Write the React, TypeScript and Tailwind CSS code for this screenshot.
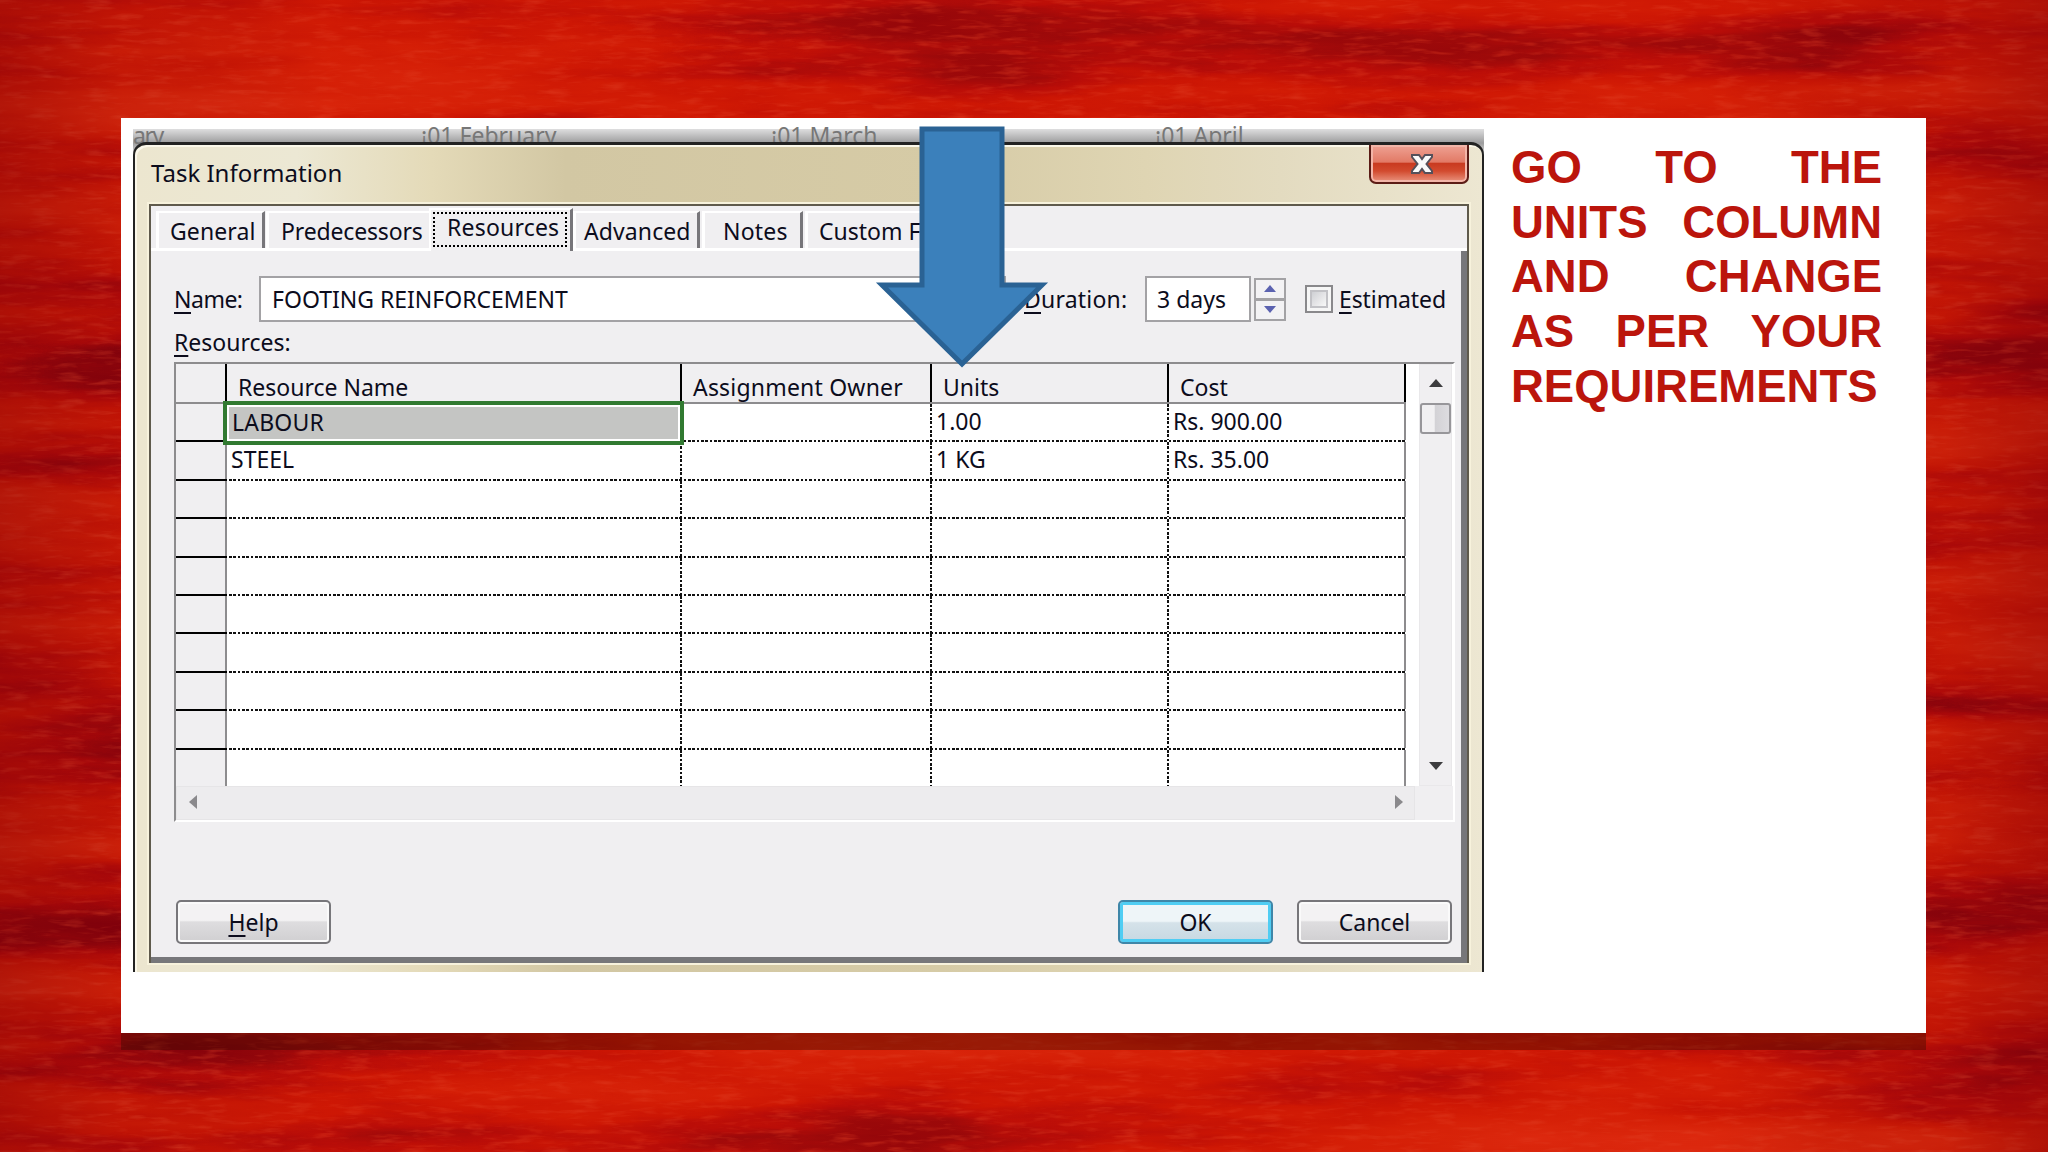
import type { ReactNode } from "react";
import clsx from "clsx";

const rows = [
  { name: "LABOUR", owner: "", units: "1.00", cost: "Rs. 900.00" },
  { name: "STEEL", owner: "", units: "1 KG", cost: "Rs. 35.00" },
  ...Array.from({ length: 8 }, () => ({ name: "", owner: "", units: "", cost: "" })),
];

const dotsX = "bg-[repeating-linear-gradient(90deg,#111_0_2.6px,transparent_2.6px_4.33px)]";
const dotsY = "bg-[repeating-linear-gradient(180deg,#111_0_2.6px,transparent_2.6px_4.33px)]";

function PaintedBackdrop() {
  return (
    <svg className="absolute inset-0" width="2048" height="1152">
      <defs>
        <filter id="paint" x="0" y="0" width="100%" height="100%" colorInterpolationFilters="sRGB">
          <feTurbulence type="fractalNoise" baseFrequency="0.0016 0.0125" numOctaves="7" seed="23" />
          <feColorMatrix values="1 0 0 0 0  1 0 0 0 0  1 0 0 0 0  0 0 0 0 1" />
          <feComponentTransfer>
            <feFuncR type="table" tableValues="0.5 0.5 0.55 0.7 0.8 0.84 0.86 0.88 0.88" />
            <feFuncG type="table" tableValues="0 0 0.02 0.04 0.09 0.13 0.16 0.18 0.2" />
            <feFuncB type="table" tableValues="0.05 0.05 0.05 0.04 0.02 0.03 0.05 0.07 0.1" />
          </feComponentTransfer>
        </filter>
        <filter id="grain" x="0" y="0" width="100%" height="100%" colorInterpolationFilters="sRGB">
          <feTurbulence type="fractalNoise" baseFrequency="0.035 0.2" numOctaves="3" seed="4" />
          <feColorMatrix values="0 0 0 0 0.9  0 0 0 0 0.3  0 0 0 0 0.18  2.4 0 0 0 -1.2" />
        </filter>
        <linearGradient id="edges">
          <stop offset="0" stopColor="#7a0008" stopOpacity="0.4" />
          <stop offset="0.06" stopColor="#7a0008" stopOpacity="0.15" />
          <stop offset="0.16" stopColor="#d01602" stopOpacity="0.25" />
          <stop offset="0.84" stopColor="#d01602" stopOpacity="0.25" />
          <stop offset="0.95" stopColor="#7a0008" stopOpacity="0.15" />
          <stop offset="1" stopColor="#7a0008" stopOpacity="0.4" />
        </linearGradient>
      </defs>
      <rect width="2048" height="1152" filter="url(#paint)" />
      <rect width="2048" height="1152" filter="url(#grain)" opacity="0.5" />
      <rect width="2048" height="1152" fill="url(#edges)" />
    </svg>
  );
}

function Tab({ children, className }: { children: ReactNode; className?: string }) {
  return (
    <div
      className={clsx(
        "h-[37px] border-t-2 border-l-3 border-white bg-[#f0eff1] text-[23px] leading-[36px] whitespace-nowrap",
        className,
      )}
    >
      {children}
    </div>
  );
}

function Hot({ letter, rest }: { letter: string; rest: string }) {
  return (
    <span>
      <span className="underline decoration-2 underline-offset-[4px]">{letter}</span>
      {rest}
    </span>
  );
}

function DialogButton({ children, primary }: { children: ReactNode; primary?: boolean }) {
  return (
    <button
      className={clsx(
        "h-[44px] w-[155px] rounded-[5px] border-2 text-[23px] leading-[40px]",
        primary
          ? "border-[#3f86a8] bg-[linear-gradient(#eef5f8_0_48%,#d5e2e9_52%,#c6d8e2)] shadow-[inset_0_0_0_3px_#4fcdf3]"
          : "border-[#77767a] bg-[linear-gradient(#f3f2f3_0_46%,#dedddf_50%,#d0cfd1)] shadow-[inset_0_0_0_2px_#fafafa]",
      )}
    >
      {children}
    </button>
  );
}

function HeaderCell({ children, className }: { children?: ReactNode; className: string }) {
  return (
    <div className={clsx("h-full border-r-2 border-black pt-[6px] text-[23px] leading-[34px]", className)}>
      {children}
    </div>
  );
}

function BodyCell({ children, width, last }: { children?: ReactNode; width: string; last?: boolean }) {
  return (
    <div className={clsx("flex h-full justify-between", width)}>
      <span className="pl-[4px] leading-[35px]">{children}</span>
      <div className={clsx("h-full", last ? "w-[2px] bg-[#8d8c8e]" : clsx("w-[2px]", dotsY))} />
    </div>
  );
}

function ResourceTable() {
  return (
    <div className="ml-[23px] h-[460px] w-[1281px] border-2 border-t-[#8d8c8e] border-r-white border-b-white border-l-[#8d8c8e] bg-white">
      <div className="flex h-[422px]">
        <div className="relative w-[1230px] overflow-hidden">
          <div className="flex h-[40px] border-b-2 border-[#8d8c8e] bg-[#f0eff1]">
            <HeaderCell className="w-[51px]" />
            <HeaderCell className="w-[455px] pl-[11px]">Resource Name</HeaderCell>
            <HeaderCell className="w-[250px] pl-[11px] tracking-[0.2px]">Assignment Owner</HeaderCell>
            <HeaderCell className="w-[237px] pl-[11px]">Units</HeaderCell>
            <HeaderCell className="w-[237px] pl-[11px]">Cost</HeaderCell>
          </div>
          {rows.map((row, i) => (
            <div key={i} className="h-[38.4px] text-[23px]">
              <div className="flex h-[36.4px]">
                <div className="w-[51px] border-r-2 border-[#8d8c8e] bg-[#f0eff1]" />
                <BodyCell width="w-[455px]">{i === 0 ? "" : row.name}</BodyCell>
                <BodyCell width="w-[250px]">{row.owner}</BodyCell>
                <BodyCell width="w-[237px]">{row.units}</BodyCell>
                <BodyCell width="w-[237px]" last>{row.cost}</BodyCell>
              </div>
              <div className="flex h-[2px]">
                <div className="w-[51px] bg-black" />
                <div className={clsx("ml-[2px] flex-1", dotsX)} />
              </div>
            </div>
          ))}
          {/* selected cell frame */}
          <div className="absolute top-[37px] left-[47px] h-[44px] w-[461px] border-4 border-[#317a31] bg-[#c4c5c3] pl-[5px] text-[23px] leading-[34px] tracking-[0.2px] shadow-[inset_0_0_0_2px_#fff]">
            {rows[0].name}
          </div>
        </div>
        <div className="ml-[13px] flex w-[33px] flex-col items-center justify-between border border-[#e9e8ea] bg-[#f0eff1] pt-[14px] pb-[14px]">
          <div className="flex flex-col items-center">
            <svg width="16" height="9">
              <path d="M8 0 L15 8 H1 Z" fill="#3c3c3e" />
            </svg>
            <div className="mt-[15px] h-[31px] w-[31px] rounded-[3px] border-2 border-[#97969a] bg-[linear-gradient(90deg,#f1f0f2_45%,#d3d2d6_50%,#dddce0)]" />
          </div>
          <svg width="16" height="9">
            <path d="M1 0 H15 L8 8 Z" fill="#3c3c3e" />
          </svg>
        </div>
      </div>
      <div className="flex h-[34px] bg-[#f0eff1]">
        <div className="flex w-[1239px] items-center justify-between border border-[#e6e5e7] bg-[#edecee] pr-[10px] pb-[2px] pl-[11px]">
          <svg width="10" height="16">
            <path d="M9 1 V15 L1 8 Z" fill="#8a898c" />
          </svg>
          <svg width="10" height="16">
            <path d="M1 1 V15 L9 8 Z" fill="#8a898c" />
          </svg>
        </div>
      </div>
    </div>
  );
}

function TaskDialog() {
  return (
    <div className="flex h-[830px] flex-col rounded-t-[13px] border-x-2 border-t-3 border-[#222] bg-[linear-gradient(90deg,#ece6cf,#ece8d4_12%,#e4dab8_22%,#d2c7a3_32%,#d6cba6_60%,#dfd5b3_75%,#e3dbc0_85%,#ede7d2)] shadow-[inset_2px_2px_0_#fbf8ea]">
      <div className="flex h-[59px] justify-between pr-[13px] pl-[16px]">
        <h1 className="pt-[9px] text-[24px] leading-[38px]">Task Information</h1>
        <div className="flex h-[39px] w-[100px] items-center justify-center rounded-b-[7px] border-2 border-t-0 border-[#5b1c16] bg-[linear-gradient(#efa294_0,#e27a66_46%,#c93a20_50%,#d24a2e_70%,#ea9580)] pl-[5px] shadow-[inset_0_0_0_2px_#f2b5a8]">
          <svg width="24" height="22" viewBox="0 0 24 22">
            <path
              d="M2 2 H9 L12 6 L15 2 H22 V4 L16.500 11 L22 18 V20 H15 L12 16 L9 20 H2 V18 L7.500 11 L2 4 Z"
              fill="#fafafa"
              stroke="#55505a"
              strokeWidth="2"
            />
          </svg>
        </div>
      </div>
      <div className="mr-[13px] ml-[14px] h-[759px] border-2 border-b-0 border-[#5f5a4c] bg-[#f0eff1] shadow-[0_0_0_2px_#f7f2dc]">
        <div className="flex h-[45px] items-end border-b-3 border-white pl-[5px]">
          <Tab className="w-[109px] border-r-3 border-r-[#77767a] pl-[11px] tracking-[0.100px]">General</Tab>
          <Tab className="ml-[1px] w-[163px] pl-[12px] tracking-[-0.150px]">Predecessors</Tab>
          <div className="-mb-[3px] h-[43px] w-[144px] border-t-2 border-r-3 border-l-2 border-white border-r-[#77767a] bg-[#f0eff1] p-[2px] text-[23px]">
            <div className="h-[35px] w-[134px] border-2 border-dotted border-black pl-[12px] leading-[27px] tracking-[0.2px]">
              Resources
            </div>
          </div>
          <Tab className="w-[127px] border-r-3 border-r-[#77767a] pl-[8px] tracking-[0.1px]">Advanced</Tab>
          <Tab className="ml-[2px] w-[101px] border-r-3 border-r-[#77767a] pl-[18px] tracking-[0.2px]">Notes</Tab>
          <Tab className="ml-[2px] w-[170px] pl-[11px]">Custom Fields</Tab>
        </div>
        <div className="flex h-[712px] flex-col border-r-6 border-b-6 border-[#77777a]">
          <div className="mt-[25px] flex h-[46px] items-center pl-[23px] text-[23px]">
            <div className="w-[85px] tracking-[-0.5px]">
              <Hot letter="N" rest="ame:" />
            </div>
            <div className="h-[46px] w-[747px] border-2 border-[#a3a2a5] bg-white pl-[11px] leading-[42px]">
              FOOTING REINFORCEMENT
            </div>
            <div className="ml-[18px] w-[121px] tracking-[0.2px]">
              <Hot letter="D" rest="uration:" />
            </div>
            <div className="h-[46px] w-[106px] border-2 border-[#a3a2a5] bg-white pl-[10px] leading-[42px]">3 days</div>
            <div className="ml-[3px] flex h-[43px] w-[32px] flex-col border-2 border-[#a3a2a5] bg-[#a3a2a5]">
              <div className="flex h-[18px] items-center justify-center bg-[#f3f2f4]">
                <svg width="12" height="7"><path d="M6 0 L12 7 H0 Z" fill="#5b62b0" /></svg>
              </div>
              <div className="mt-[3px] flex flex-1 items-center justify-center bg-[#f3f2f4]">
                <svg width="12" height="7"><path d="M0 0 H12 L6 7 Z" fill="#5b62b0" /></svg>
              </div>
            </div>
            <div className="ml-[19px] h-[28px] w-[28px] border-2 border-[#89888b] bg-[#f6f6f6] p-[3px]">
              <div className="h-full border-2 border-[#c2c2c6] bg-[linear-gradient(135deg,#cfd0d4,#f8f8f8)]" />
            </div>
            <div className="ml-[6px] tracking-[-0.1px]">
              <Hot letter="E" rest="stimated" />
            </div>
          </div>
          <div className="mt-[3px] h-[37px] pl-[23px] text-[23px] leading-[34px]">
            <Hot letter="R" rest="esources:" />
          </div>
          <ResourceTable />
          <div className="mt-[78px] flex pl-[25px]">
            <DialogButton>
              <Hot letter="H" rest="elp" />
            </DialogButton>
            <div className="ml-[787px] flex gap-[24px]">
              <DialogButton primary>OK</DialogButton>
              <DialogButton>Cancel</DialogButton>
            </div>
          </div>
        </div>
      </div>
    </div>
  );
}

export default function App() {
  return (
    <div className="relative h-[1152px] w-[2048px] overflow-hidden bg-[#c41a08]">
      <PaintedBackdrop />
      <div className="relative pt-[118px] pl-[121px]">
        <div className="flex h-[915px] w-[1805px] bg-white pt-[11px] pl-[12px] shadow-[0_17px_0_rgba(50,10,0,0.38)]">
          <div className="h-[843px] w-[1351px] bg-[linear-gradient(#dededf,#9c9c9d_14px,#c8c8c8_22px,#fff_34px)] font-['Noto_Sans',sans-serif] text-[#0c0c1c]">
            <div className="flex h-[13px] text-[23px] leading-[13px] text-[#777]">
              <span className="w-[288px] tracking-[-1.500px]">ary</span>
              <span className="w-[350px]">¡01 February</span>
              <span className="w-[384px]">¡01 March</span>
              <span>¡01 April</span>
            </div>
            <div className="relative">
              <TaskDialog />
            </div>
          </div>
          <div className="mt-[12px] ml-[27px] w-[371px] font-['Liberation_Sans',Arial,sans-serif] text-[45.500px] leading-[54.670px] font-bold text-[#bb150c]">
            {["GO TO THE", "UNITS COLUMN", "AND CHANGE", "AS PER YOUR", "REQUIREMENTS"].map((line) => (
              <p key={line} className="flex justify-between">
                {line.split(" ").map((word) => (
                  <span key={word}>{word}</span>
                ))}
              </p>
            ))}
          </div>
        </div>
      </div>
      {/* arrow pointing at the Units column */}
      <svg className="absolute top-[120px] left-[870px]" width="184" height="255">
        <path d="M52 9 H132 V165 H172 L92 244 L12 165 H52 Z" fill="#3b80bb" stroke="#2a6294" strokeWidth="5" />
      </svg>
    </div>
  );
}
